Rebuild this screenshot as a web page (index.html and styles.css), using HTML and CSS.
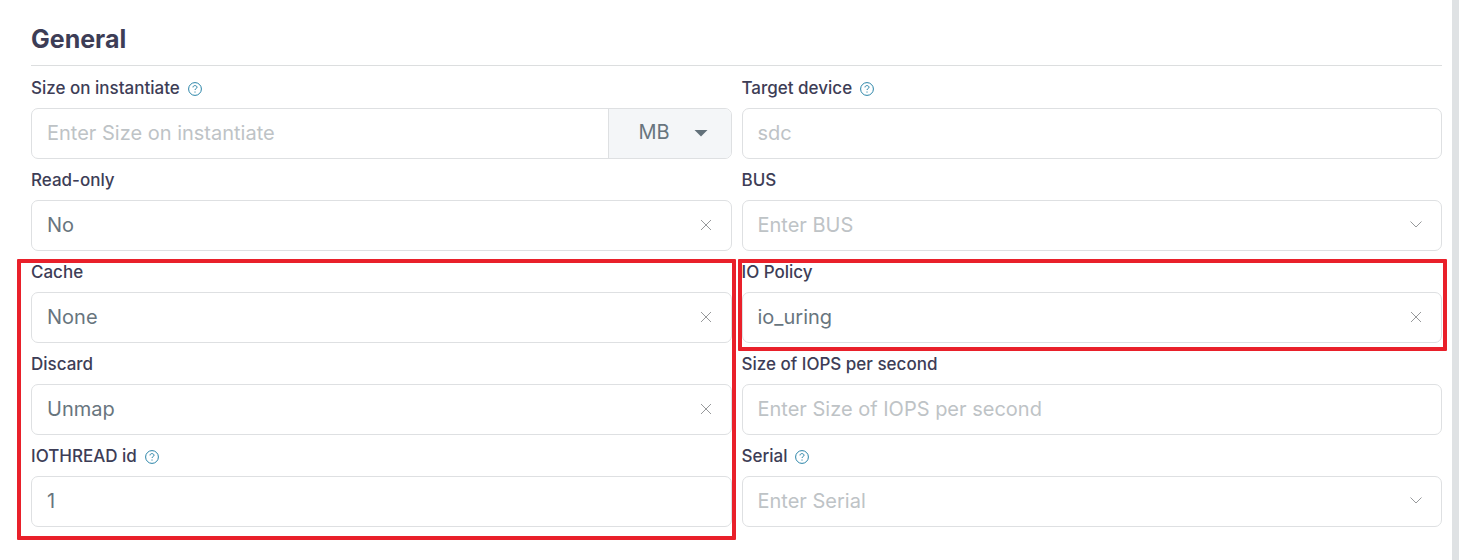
FILE: index.html
```html
<!DOCTYPE html>
<html lang="en">
<head>
  <meta charset="UTF-8">
  <meta name="viewport" content="width=device-width, initial-scale=1.0">
  <title>General</title>
  <link rel="stylesheet" href="styles.css">
</head>
<body>
  <!-- shared icons -->
  <svg class="sprite" aria-hidden="true">
    <symbol id="i-help" viewBox="0 0 14 14">
      <circle cx="7" cy="7" r="6.4"/>
      <path d="M5 5.4C5 4.200 5.900 3.600 7 3.600s2 .7 2 1.700c0 1.300-2 1.300-2 2.700M7 9.500v1.100"/>
    </symbol>
    <symbol id="i-clear" viewBox="0 0 12 12">
      <path d="M1 1l10 10M11 1L1 11"/>
    </symbol>
    <symbol id="i-chevron" viewBox="0 0 12 12">
      <path d="M.5 2.500L6 8l5.500-5.500"/>
    </symbol>
    <symbol id="i-caret" viewBox="0 0 14 8">
      <path d="M.5 1h13L7 7.500z"/>
    </symbol>
  </svg>

  <main class="panel">
    <h2>General</h2>
    <form class="columns">
      <div class="column">
        <div class="field">
          <label for="size">Size on instantiate <svg class="help"><use href="#i-help"/></svg></label>
          <div class="control group">
            <input type="text" id="size" placeholder="Enter Size on instantiate">
            <div class="unit">
              <select aria-label="Size unit">
                <option>MB</option>
                <option>GB</option>
                <option>TB</option>
              </select>
              <svg class="caret"><use href="#i-caret"/></svg>
            </div>
          </div>
        </div>
        <div class="field">
          <label for="readonly">Read-only</label>
          <div class="control">
            <select id="readonly"><option>No</option><option>Yes</option></select>
            <button type="button" class="icon" aria-label="Clear"><svg><use href="#i-clear"/></svg></button>
          </div>
        </div>
        <div class="highlight highlight-left">
          <div class="field">
            <label for="cache">Cache</label>
            <div class="control">
              <select id="cache"><option>None</option></select>
              <button type="button" class="icon" aria-label="Clear"><svg><use href="#i-clear"/></svg></button>
            </div>
          </div>
          <div class="field">
            <label for="discard">Discard</label>
            <div class="control">
              <select id="discard"><option>Unmap</option></select>
              <button type="button" class="icon" aria-label="Clear"><svg><use href="#i-clear"/></svg></button>
            </div>
          </div>
          <div class="field">
            <label for="iothread">IOTHREAD id <svg class="help"><use href="#i-help"/></svg></label>
            <div class="control">
              <input type="text" id="iothread" value="1">
            </div>
          </div>
        </div>
      </div>

      <div class="column">
        <div class="field">
          <label for="target">Target device <svg class="help"><use href="#i-help"/></svg></label>
          <div class="control">
            <input type="text" id="target" placeholder="sdc">
          </div>
        </div>
        <div class="field">
          <label for="bus">BUS</label>
          <div class="control">
            <select id="bus" class="empty"><option value="">Enter BUS</option></select>
            <span class="icon"><svg><use href="#i-chevron"/></svg></span>
          </div>
        </div>
        <div class="highlight highlight-right">
          <div class="field">
            <label for="io">IO Policy</label>
            <div class="control">
              <select id="io"><option>io_uring</option></select>
              <button type="button" class="icon" aria-label="Clear"><svg><use href="#i-clear"/></svg></button>
            </div>
          </div>
        </div>
        <div class="field">
          <label for="iops">Size of IOPS per second</label>
          <div class="control">
            <input type="text" id="iops" placeholder="Enter Size of IOPS per second">
          </div>
        </div>
        <div class="field">
          <label for="serial">Serial <svg class="help"><use href="#i-help"/></svg></label>
          <div class="control">
            <select id="serial" class="empty"><option value="">Enter Serial</option></select>
            <span class="icon"><svg><use href="#i-chevron"/></svg></span>
          </div>
        </div>
      </div>
    </form>
  </main>
</body>
</html>
```
FILE: styles.css
```css
* {
  box-sizing: border-box;
}
body {
  margin: 0;
  padding-right: 18px;
  background-color: #fff;
  font-family: Inter, sans-serif;
  color: #3d3d56;
}
.sprite {
  position: absolute;
  width: 0;
  height: 0;
}
svg {
  display: block;
  fill: none;
  stroke: currentColor;
}
.panel {
  min-height: 100vh;
  padding: 14px 10px 32px 31px;
  border-right: 7px solid #dfe2e4;
}
h2 {
  margin: 0 0 1px;
  padding-bottom: 1px;
  border-bottom: 1px solid #dcdedf;
  font-size: 25px;
  font-weight: 700;
  line-height: 50px;
}
.columns {
  display: grid;
  grid-template-columns: 1fr 1fr;
  gap: 10px;
}
label {
  display: flex;
  align-items: center;
  gap: 8px;
  padding: 9px 0 8px;
  font-size: 17px;
  font-weight: 500;
  line-height: 24px;
}
.help {
  width: 14px;
  height: 14px;
  margin-top: 2px;
  color: #2a84a8;
}
.control {
  display: flex;
  position: relative;
  height: 51px;
  border: 1px solid #dee0e2;
  border-radius: 7px;
  overflow: hidden;
}
input, select {
  flex: 1;
  min-width: 0;
  padding: 0 15px 2px;
  border: 0;
  outline: 0;
  background: none;
  appearance: none;
  font: 400 20px Inter, sans-serif;
  color: #68757e;
}
input::placeholder, .empty {
  color: #bec3c6;
  opacity: 1;
}
.icon {
  position: absolute;
  top: 0;
  right: 0;
  height: 100%;
  padding: 0 19px 2px;
  border: 0;
  background: none;
  display: flex;
  align-items: center;
  color: #97999b;
}
button.icon {
  cursor: pointer;
}
span.icon {
  pointer-events: none;
}
.icon svg {
  width: 12px;
  height: 12px;
}
.unit {
  display: flex;
  position: relative;
  width: 123px;
  border-left: 1px solid #dee0e2;
  background-color: #f4f6f8;
}
.unit select {
  padding: 0 30px 3px;
}
.caret {
  position: absolute;
  top: 20px;
  right: 23px;
  width: 14px;
  height: 8px;
  fill: #62717a;
  stroke: none;
  pointer-events: none;
}
/* red frames around the tuned options */
.highlight {
  position: relative;
}
.highlight::after {
  content: "";
  position: absolute;
  border: 4px solid #e9202a;
  border-radius: 1px;
  pointer-events: none;
}
.highlight-left::after {
  inset: 8px -4px -13px -14px;
}
.highlight-right::after {
  inset: 8px -5px -8px -4px;
}
```
